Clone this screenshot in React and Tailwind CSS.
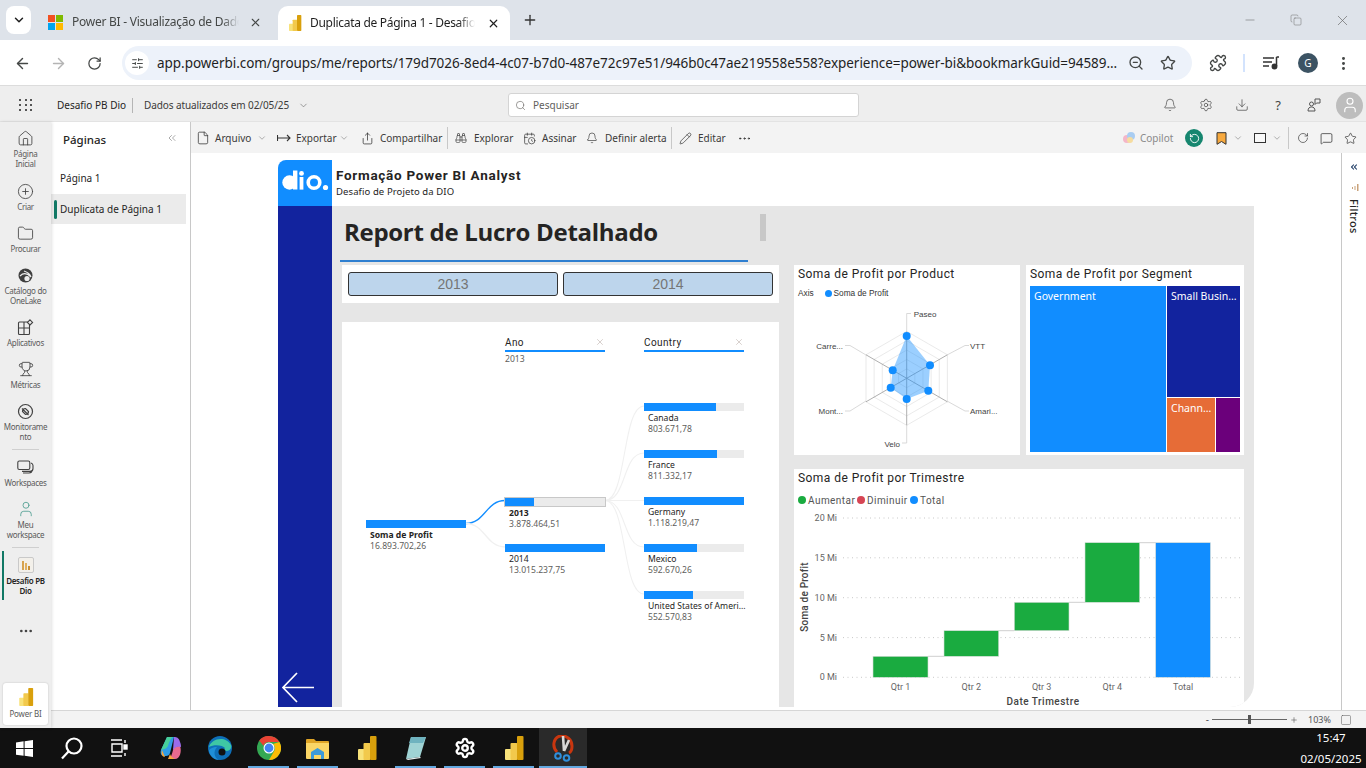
import {
  ArrowLeft, ArrowRight, RotateCw, Search, ZoomOut, Star, Puzzle, MoreVertical, Bell, Settings, Download,
  HelpCircle, ChevronDown, ChevronsLeft, File, Share, Binoculars, Pencil, MoreHorizontal, House, CirclePlus,
  Folder, Trophy, User, X, Plus, Minus, Square, Copy, MessageSquare, RotateCcw, SlidersHorizontal,
  CalendarClock,
} from 'lucide-react';

const din = "font-['Roboto',sans-serif]";

function PbiLogo({ size = 18 }) {
  return (
    <svg width={size} height={size} viewBox="0 0 24 24">
      <rect x="3" y="13" width="7" height="11" rx="1" fill="#f8e27a" />
      <rect x="8.5" y="7" width="7" height="17" rx="1" fill="#f2c94c" />
      <rect x="15" y="0" width="6.5" height="24" rx="1" fill="#d9a00c" />
    </svg>
  );
}

function NavItem({ icon, label, h, bold }) {
  return (
    <div className={`w-full flex flex-col items-center ${h}`}>
      <div className="h-[18px] flex items-center justify-center text-[#424242]">{icon}</div>
      <div className={`mt-[2px] text-[8px] tracking-[-0.3px] leading-[10px] text-center whitespace-pre-line ${bold ? 'font-semibold text-[#252423]' : 'text-[#5a5a5a]'}`}>
        {label}
      </div>
    </div>
  );
}

function Sidebar() {
  return (
    <div className="relative w-[51px] shrink-0 bg-[#eeeeee] flex flex-col items-center pt-[7px] shadow-[1px_0_3px_rgba(0,0,0,0.12)] z-10">
      <NavItem h="h-[53px]" label={'Página\nInicial'} icon={<House size={17} strokeWidth={1.2} />} />
      <NavItem h="h-[42px]" label="Criar" icon={<CirclePlus size={17} strokeWidth={1.2} />} />
      <NavItem h="h-[42px]" label="Procurar" icon={<Folder size={17} strokeWidth={1.2} />} />
      <NavItem
        h="h-[52px]"
        label={'Catálogo do\nOneLake'}
        icon={
          <svg width="17" height="17" viewBox="0 0 17 17">
            <circle cx="8.5" cy="8.5" r="7" fill="#3f3f3f" />
            <path d="M3 9c3-3 7-3 11 1M7 4c3 1 6 3 7 6" fill="none" stroke="#eee" strokeWidth="1.2" />
            <circle cx="10" cy="11.5" r="2.6" fill="#eee" />
          </svg>
        }
      />
      <NavItem
        h="h-[42px]"
        label="Aplicativos"
        icon={
          <svg width="17" height="17" viewBox="0 0 17 17" fill="none" stroke="#424242" strokeWidth="1.1">
            <rect x="1.5" y="3" width="11" height="12.5" rx="1" />
            <path d="M7 3v12.5M1.5 9h11" />
            <path d="M13 0.8l2.6 2.6L13 6l-2.6-2.6z" fill="#eee" />
          </svg>
        }
      />
      <NavItem h="h-[42px]" label="Métricas" icon={<Trophy size={16} strokeWidth={1.3} />} />
      <NavItem
        h="h-[47px]"
        label={'Monitorame\nnto'}
        icon={
          <svg width="17" height="17" viewBox="0 0 17 17" fill="none" stroke="#424242" strokeWidth="1.2">
            <circle cx="8.5" cy="8.5" r="7" />
            <path d="M5 5.5l6.5 6.5M5.5 8.5a3 3 0 0 1 3-3l3 3a3 3 0 0 1-3 3z" />
          </svg>
        }
      />
      <div className="w-[27px] h-px bg-[#cfcfcf] mb-[8px]" />
      <NavItem
        h="h-[42px]"
        label="Workspaces"
        icon={
          <svg width="17" height="17" viewBox="0 0 17 17" fill="none" stroke="#424242" strokeWidth="1.1">
            <rect x="0.8" y="2" width="12" height="8.5" rx="1.5" />
            <path d="M14 4c1.4.6 2 1.2 2 2.4v3c0 2-1 3-3 3H5M15 11c0 2-1 3-3 3H6" />
          </svg>
        }
      />
      <NavItem h="h-[47px]" label={'Meu\nworkspace'} icon={<User size={18} strokeWidth={1.1} className="text-[#4a9b8e]" />} />
      <div className="w-[27px] h-px bg-[#cfcfcf] mb-[8px]" />
      <NavItem
        bold
        h="h-[67px]"
        label={'Desafio PB\nDio'}
        icon={
          <div className="w-[16px] h-[16px] rounded-[2px] bg-[#f3f0ea] border border-[#c9c9c9] flex items-end justify-center gap-[1px] pb-[2px]">
            <span className="w-[2px] h-[9px] bg-[#d7a34f]" />
            <span className="w-[2px] h-[7px] bg-[#e0b060]" />
            <span className="w-[2px] h-[4px] bg-[#c98f35]" />
          </div>
        }
      />
      <div className="absolute left-[2px] top-[429px] w-[2px] h-[49px] bg-[#117865]" />
      <MoreHorizontal size={16} className="text-[#444]" />
      <div className="mt-auto mb-[3px] w-[45px] h-[42px] bg-white rounded-[3px] shadow-[0_0_2px_rgba(0,0,0,0.2)] flex flex-col items-center pt-[5px]">
        <PbiLogo size={18} />
        <div className="mt-[3px] text-[8px] tracking-[-0.2px] leading-[10px] text-[#5a5a5a]">Power BI</div>
      </div>
    </div>
  );
}

function PagesPanel() {
  return (
    <div className="w-[140px] shrink-0 bg-white border-r border-[#c8c8c8] flex flex-col">
      <div className="h-[34px] flex items-center justify-between pl-[12px] pr-[12px] pt-[1px] text-[#252423]">
        <span className="text-[11.5px] font-medium">Páginas</span>
        <ChevronsLeft size={12} strokeWidth={1} className="text-[#555] -mt-[3px]" />
      </div>
      <div className="mt-[7px] h-[31px] pl-[9px] flex items-center text-[10px] text-[#252423]">Página 1</div>
      <div className="w-[135px] h-[30px] bg-[#ebebeb] flex items-center pl-[3px] text-[10px] text-[#252423]">
        <span className="w-[3px] h-[19px] rounded-sm bg-[#117865] mr-[3px]" />
        Duplicata de Página 1
      </div>
    </div>
  );
}

function Toolbar() {
  const txt = 'text-[10px] text-[#3b3a39] whitespace-nowrap';
  return (
    <div className="h-[31px] bg-[#f3f3f3] pt-[1px] flex items-center text-[#333]">
      <File size={14} strokeWidth={1.3} className="ml-[5px]" />
      <span className={`${txt} ml-[5px] w-[40px]`}>Arquivo</span>
      <ChevronDown size={10} strokeWidth={1.2} className="ml-[2px] text-[#666]" />
      <svg width="14" height="10" viewBox="0 0 14 10" className="ml-[10px]" fill="none" stroke="#333" strokeWidth="1.1">
        <path d="M0.5 2v6M1 5h12M10 2l3 3-3 3" />
      </svg>
      <span className={`${txt} ml-[5px] w-[43px]`}>Exportar</span>
      <ChevronDown size={10} strokeWidth={1.2} className="text-[#666]" />
      <Share size={13} strokeWidth={1.4} className="ml-[12px]" />
      <span className={`${txt} ml-[6px] w-[61px]`}>Compartilhar</span>
      <span className="w-px h-[22px] bg-[#c8c8c8] ml-[6px]" />
      <Binoculars size={12} strokeWidth={1.3} className="ml-[7px]" />
      <span className={`${txt} ml-[7px] w-[39px]`}>Explorar</span>
      <CalendarClock size={13} strokeWidth={1.3} className="ml-[10px]" />
      <span className={`${txt} ml-[6px] w-[35px]`}>Assinar</span>
      <Bell size={12} strokeWidth={1.3} className="ml-[9px]" />
      <span className={`${txt} ml-[7px] w-[61px]`}>Definir alerta</span>
      <span className="w-px h-[22px] bg-[#c8c8c8] ml-[5px]" />
      <Pencil size={13} strokeWidth={1.3} className="ml-[7px]" />
      <span className={`${txt} ml-[6px] w-[30px]`}>Editar</span>
      <MoreHorizontal size={15} strokeWidth={1.5} className="ml-[9px]" />

      <div className="ml-auto flex items-center">
        <svg width="14" height="14" viewBox="0 0 14 14">
          <circle cx="5" cy="8" r="4" fill="#f4b6c8" />
          <circle cx="9" cy="5" r="4" fill="#a9cdf2" />
          <circle cx="8" cy="9" r="3" fill="#f6dca0" />
        </svg>
        <span className="ml-[4px] w-[42px] text-[10px] text-[#8a8a8a]">Copilot</span>
        <span className="ml-[3px] w-[18px] h-[18px] rounded-full bg-[#16866f] flex items-center justify-center">
          <RotateCcw size={11} strokeWidth={2} className="text-white" />
        </span>
        <svg width="11" height="13" viewBox="0 0 11 13" className="ml-[13px]">
          <path d="M1 .7h9v11.6L5.5 9.5 1 12.3z" fill="#f7a93e" stroke="#333" strokeWidth="1" />
        </svg>
        <ChevronDown size={10} strokeWidth={1.2} className="ml-[6px] text-[#666]" />
        <span className="ml-[11px] w-[12px] h-[10px] border border-[#333] bg-[#f8f8f8]" />
        <ChevronDown size={10} strokeWidth={1.2} className="ml-[6px] text-[#666]" />
        <span className="w-px h-[22px] bg-[#c8c8c8] ml-[6px]" />
        <RotateCw size={12} strokeWidth={1.3} className="ml-[8px]" />
        <MessageSquare size={13} strokeWidth={1.4} className="ml-[11px]" />
        <Star size={13} strokeWidth={1.3} className="ml-[11px] mr-[9px]" />
      </div>
    </div>
  );
}

function DioLogo() {
  return (
    <svg width="48" height="22" viewBox="0 0 48 22" fill="white">
      <circle cx="8.500" cy="12.500" r="7.200" />
      <path d="M12 .5h4.400v19H12z" />
      <circle cx="20.500" cy="3.400" r="2.400" />
      <path d="M18.600 7h3.800v12.600h-3.800z" />
      <circle cx="33" cy="12.500" r="5.800" fill="none" stroke="white" strokeWidth="3.600" />
      <circle cx="44.500" cy="17.500" r="2.600" />
    </svg>
  );
}

function DecompNode({ fill, label, value, selected, strong, className = '' }) {
  return (
    <div className={`w-[100px] ${className}`}>
      <div className={`h-[8px] bg-[#ebebeb] ${selected ? 'outline outline-1 outline-[#c8c8c8]' : ''}`}>
        <div className={`h-full bg-[#118dff] ${fill}`} />
      </div>
      <div className={`mt-[1px] pl-[4px] text-[8.6px] leading-[12px] whitespace-nowrap ${strong ? 'font-bold text-[#252423]' : 'text-[#252423]'}`}>{label}</div>
      <div className="pl-[4px] text-[8.6px] leading-[11px] text-[#605e5c]">{value}</div>
    </div>
  );
}

function ColumnHeader({ title, className = '' }) {
  return (
    <div className={`w-[100px] h-[16px] pb-[2px] border-b-2 border-[#118dff] flex items-center justify-between text-[10px] text-[#252423] ${din} tracking-[0.4px] ${className}`}>
      {title}
      <X size={10} strokeWidth={1} className="text-[#a08f88]" />
    </div>
  );
}

function DecompTree() {
  const pale = '#f0f0f0';
  return (
    <div className="relative flex-1 bg-white">
      <svg className="absolute inset-0" width="437" height="385" viewBox="342 322 437 385" fill="none">
        <path d="M466 523.5C485 523.5 486 500.5 505 500.5" stroke="#118dff" strokeWidth="1.3" />
        <path d="M466 523.5C485 523.5 486 547 505 547" stroke={pale} strokeWidth="1.3" />
        <path d="M605 500.5C627 500.5 622 406 644 406" stroke={pale} strokeWidth="1.1" />
        <path d="M605 500.5C627 500.5 622 453 644 453" stroke={pale} strokeWidth="1.1" />
        <path d="M605 500.5H644" stroke={pale} strokeWidth="1.1" />
        <path d="M605 500.5C627 500.5 622 547 644 547" stroke={pale} strokeWidth="1.1" />
        <path d="M605 500.5C627 500.5 622 594 644 594" stroke={pale} strokeWidth="1.1" />
      </svg>
      <div className="relative flex pl-[24px]">
        <div className="pt-[198px]">
          <DecompNode fill="w-full" label="Soma de Profit" value="16.893.702,26" strong />
        </div>
        <div className="ml-[39px] pt-[14px]">
          <ColumnHeader title="Ano" />
          <div className="mt-[2px] text-[8.6px] leading-[11px] text-[#605e5c]">2013</div>
          <DecompNode selected className="mt-[133px] h-[46px]" fill="w-[29px]" label="2013" value="3.878.464,51" strong />
          <DecompNode fill="w-full" label="2014" value="13.015.237,75" />
        </div>
        <div className="ml-[39px] pt-[14px]">
          <ColumnHeader title="Country" />
          <div className="mt-[51px]" />
          <DecompNode className="h-[47px]" fill="w-[72px]" label="Canada" value="803.671,78" />
          <DecompNode className="h-[47px]" fill="w-[73px]" label="France" value="811.332,17" />
          <DecompNode className="h-[47px]" fill="w-full" label="Germany" value="1.118.219,47" />
          <DecompNode className="h-[47px]" fill="w-[53px]" label="Mexico" value="592.670,26" />
          <DecompNode className="h-[47px]" fill="w-[49px]" label="United States of Ameri..." value="552.570,83" />
        </div>
      </div>
    </div>
  );
}

function VisualTitle({ children }) {
  return <div className={`h-[17px] pl-[4px] text-[12px] leading-[17px] text-[#252423] tracking-[0.45px] whitespace-nowrap ${din}`}>{children}</div>;
}

function Radar() {
  const cx = 906.7;
  const cy = 378.3;
  const angles = [-90, -30, 30, 90, 150, 210].map((a) => (a * Math.PI) / 180);
  const hex = (r) => angles.map((a) => `${cx + r * Math.cos(a)},${cy + r * Math.sin(a)}`).join(' ');
  const pts = [[906.7, 336], [930, 365.3], [928.3, 390.7], [906.7, 399], [890.7, 387.7], [892.7, 370.3]];
  const labelClass = "font-['Liberation_Sans',sans-serif] text-[8px] fill-[#444]";
  return (
    <svg width="226" height="152" viewBox="794 303 226 152" className="block">
      {[9.4, 18.8, 28.2, 37.6, 47].map((r) => (
        <polygon key={r} points={hex(r)} fill="none" stroke="#e4e4e4" strokeWidth="0.8" />
      ))}
      {angles.map((a, i) => (
        <line key={i} x1={cx} y1={cy} x2={cx + 47 * Math.cos(a)} y2={cy + 47 * Math.sin(a)} stroke="#9a9a9a" strokeWidth="0.8" />
      ))}
      <g fill="none" stroke="#cfcfcf" strokeWidth="0.8">
        <path d="M906.7 331V313.5H911" />
        <path d="M947 355L965 345.5H969" />
        <path d="M947 401L965 411H969" />
        <path d="M906.7 425V443H902" />
        <path d="M866 401L850 411H845" />
        <path d="M866 355L850 345.5H845" />
      </g>
      <polygon points={pts.map((p) => p.join(',')).join(' ')} fill="#118dff" fillOpacity="0.42" />
      {pts.map((p, i) => (
        <circle key={i} cx={p[0]} cy={p[1]} r="4" fill="#118dff" />
      ))}
      <text x="913.7" y="317" className={labelClass}>Paseo</text>
      <text x="970" y="349" className={labelClass}>VTT</text>
      <text x="970" y="414" className={labelClass}>Amari...</text>
      <text x="900" y="447" textAnchor="end" className={labelClass}>Velo</text>
      <text x="843" y="414" textAnchor="end" className={labelClass}>Mont...</text>
      <text x="843" y="349" textAnchor="end" className={labelClass}>Carre...</text>
    </svg>
  );
}

function Waterfall() {
  const grid = [[518, '20 Mi'], [557.8, '15 Mi'], [597.7, '10 Mi'], [637.6, '5 Mi'], [677.3, '0 Mi']];
  const bars = [
    [873, 55, 656.3, 677.3, '#1aab40', 'Qtr 1'],
    [944, 54.7, 630.7, 656.3, '#1aab40', 'Qtr 2'],
    [1014.3, 54.7, 602.3, 630.7, '#1aab40', 'Qtr 3'],
    [1085, 54.7, 542.7, 602.3, '#1aab40', 'Qtr 4'],
    [1155.7, 54.7, 542.7, 677.3, '#118dff', 'Total'],
  ];
  const tick = `text-[9px] fill-[#666] ${din}`;
  return (
    <svg width="450" height="198" viewBox="794 509 450 198" className="block">
      {grid.map(([y, t]) => (
        <g key={t}>
          <line x1="843" x2="1240" y1={y} y2={y} stroke="#c8c8c8" strokeWidth="1" strokeDasharray="1 3.5" />
          <text x="837" y={y + 3} textAnchor="end" className={tick}>{t}</text>
        </g>
      ))}
      <g stroke="#cfcfcf" strokeWidth="1">
        <path d="M928 656.3H944M998.7 630.7H1014.3M1069 602.3H1085M1139.7 542.7H1155.7" />
      </g>
      {bars.map(([x, w, y1, y2, c, t]) => (
        <g key={t}>
          <rect x={x} y={y1} width={w} height={y2 - y1} fill={c} stroke="#d5dcd7" strokeWidth="0.6" />
          <text x={x + w / 2} y="689.5" textAnchor="middle" className={tick}>{t}</text>
        </g>
      ))}
      <text x="1043" y="705" textAnchor="middle" className={`text-[10px] font-medium fill-[#444] tracking-[0.5px] ${din}`}>Date Trimestre</text>
      <text transform="translate(807.5 597) rotate(-90)" textAnchor="middle" className={`text-[10px] font-medium fill-[#444] tracking-[0.2px] ${din}`}>Soma de Profit</text>
    </svg>
  );
}

function Report() {
  return (
    <div className="w-[976px] h-[547px] flex">
      <div className="w-[54px] shrink-0 flex flex-col">
        <div className="h-[46px] bg-[#118dff] rounded-tl-[8px] flex items-center justify-center pb-[5px]">
          <DioLogo />
        </div>
        <div className="flex-1 bg-[#12239e] flex flex-col justify-end">
          <svg width="34" height="32" viewBox="0 0 34 32" className="mb-[3px] ml-[3px]" fill="none" stroke="white" strokeWidth="1.7">
            <path d="M33 15.5H2M16 1L2 15.5 16 30" />
          </svg>
        </div>
      </div>
      <div className="flex-1 flex flex-col">
        <div className="h-[46px] bg-white pl-[4px] pt-[7px] text-[#252423]">
          <div className={`text-[13.5px] leading-[16px] font-bold tracking-[0.72px] ${din}`}>Formação Power BI Analyst</div>
          <div className="mt-[2px] text-[9.5px] leading-[13px] tracking-[0.1px]">Desafio de Projeto da DIO</div>
        </div>
        <div className="flex-1 min-h-0 bg-[#e6e6e6] rounded-br-[24px] overflow-hidden flex pl-[10px]">
          <div className="w-[437px] shrink-0 flex flex-col">
            <div className="h-[54px] relative">
              <div className="h-[54px] flex items-center pl-[2px] pb-[2px] text-[24px] tracking-[-0.3px] font-bold text-[#252423] font-['Open_Sans',sans-serif]">
                Report de Lucro Detalhado
              </div>
              <div className="absolute left-[418px] top-[8px] w-[6px] h-[27px] bg-[#c8c8c8]" />
              <div className="absolute -left-[2px] top-[54px] w-[408px] h-[1.5px] bg-[#2f7fd0]" />
            </div>
            <div className="mt-[5px] h-[38px] bg-white flex items-center px-[6px] gap-[5px]">
              <div className="flex-1 h-[24px] bg-[#bdd5ec] border-[1.5px] border-[#333] rounded-[3px] flex items-center justify-center text-[14px] text-[#757575] font-['Liberation_Sans',sans-serif]">2013</div>
              <div className="flex-1 h-[24px] bg-[#bdd5ec] border-[1.5px] border-[#333] rounded-[3px] flex items-center justify-center text-[14px] text-[#757575] font-['Liberation_Sans',sans-serif]">2014</div>
            </div>
            <div className="mt-[19px] flex-1 flex flex-col"><DecompTree /></div>
          </div>
          <div className="ml-[15px] w-[450px] shrink-0 flex flex-col pt-[59px]">
            <div className="flex gap-[6px]">
              <div className="w-[226px] h-[190px] bg-white">
                <div className="pt-[1px]"><VisualTitle>Soma de Profit por Product</VisualTitle></div>
                <div className="h-[20px] pl-[4px] flex items-center text-[8.3px] text-[#333] font-['Liberation_Sans',sans-serif]">
                  <span className="w-[27px]">Axis</span>
                  <span className="w-[7px] h-[7px] rounded-full bg-[#118dff]" />
                  <span className="ml-[1.5px]">Soma de Profit</span>
                </div>
                <Radar />
              </div>
              <div className="w-[218px] h-[190px] bg-white flex flex-col">
                <div className="pt-[1px] h-[21px]"><VisualTitle>Soma de Profit por Segment</VisualTitle></div>
                <div className="ml-[4px] w-[210px] h-[166px] flex gap-px text-[10.5px] text-white">
                  <div className="w-[136px] bg-[#118dff] pl-[4px] pt-[3px]">Government</div>
                  <div className="flex-1 flex flex-col gap-px">
                    <div className="h-[111px] bg-[#12239e] pl-[4px] pt-[3px] whitespace-nowrap">Small Busin...</div>
                    <div className="flex-1 flex gap-px">
                      <div className="w-[48px] bg-[#e66c37] pl-[4px] pt-[3px]">Chann...</div>
                      <div className="flex-1 bg-[#6b007b]" />
                    </div>
                  </div>
                </div>
              </div>
            </div>
            <div className="mt-[14px] flex-1 bg-white">
              <div className="pt-[1px]"><VisualTitle>Soma de Profit por Trimestre</VisualTitle></div>
              <div className={`h-[22px] pl-[4px] pt-[4px] flex items-center text-[10px] text-[#555] tracking-[0.45px] ${din}`}>
                <span className="w-[8px] h-[8px] rounded-full bg-[#1aab40]" />
                <span className="ml-[2px] w-[49px]">Aumentar</span>
                <span className="w-[8px] h-[8px] rounded-full bg-[#d64554]" />
                <span className="ml-[2px] w-[43px]">Diminuir</span>
                <span className="w-[8px] h-[8px] rounded-full bg-[#118dff]" />
                <span className="ml-[2px]">Total</span>
              </div>
              <Waterfall />
            </div>
          </div>
        </div>
      </div>
    </div>
  );
}

function TaskIcon({ children, className = '', active, mark }) {
  return (
    <div className={`relative h-full flex items-center justify-center ${className} ${active ? 'bg-[#2a2a2a]' : ''}`}>
      {children}
      {mark && <span className={`absolute bottom-0 h-[2px] bg-[#63a8e0] ${active ? 'left-0 right-0' : 'left-[4px] right-[4px]'}`} />}
    </div>
  );
}

function Taskbar() {
  return (
    <div className="h-[40px] shrink-0 bg-[#111111] flex items-center text-white">
      <TaskIcon className="w-[48px]">
        <svg width="17" height="17" viewBox="0 0 17 17" fill="white">
          <path d="M0 2.4l7.6-1.1v6.8H0zM8.6 1.2L17 0v8.1H8.6zM0 9h7.6v6.8L0 14.7zM8.6 9H17v8l-8.4-1.2z" />
        </svg>
      </TaskIcon>
      <TaskIcon className="w-[48px]">
        <svg width="24" height="24" viewBox="0 0 24 24" fill="none" stroke="white" strokeWidth="2.2">
          <circle cx="14" cy="10" r="7.5" />
          <path d="M8.5 15.5L2 22.5" />
        </svg>
      </TaskIcon>
      <TaskIcon className="w-[46px]">
        <svg width="18" height="18" viewBox="0 0 18 18" fill="none" stroke="white" strokeWidth="1.4">
          <path d="M1 1h11M1 17h11M2 5h10v8H2zM15 1v3M15 14v3" />
          <rect x="14" y="6" width="3" height="4" fill="white" />
        </svg>
      </TaskIcon>
      <TaskIcon className="w-[50px] ml-[4px]">
        <svg width="22" height="24" viewBox="0 0 22 24">
          <path d="M7 1h7l-4 16c-.5 2-2 3-4 3H4c-3 0-4-3-3-6z" fill="#2f9de6" />
          <path d="M7 1h6c-2 1-4 5-5 9-1 2-3 3-7 4z" fill="#47d09a" />
          <path d="M15 23H8c3-1 4-5 5-9 1-3 3-4 7-4 2 5 0 13-5 13z" fill="#e86a8e" />
          <path d="M14 1c3 0 5 1 6 5 1 2 1 4 1 5-4-1-6 0-8 3z" fill="#9b6bea" />
          <path d="M2 14l3 7c-3 0-4-3-3-7zM8 23h7c-2-1-4-2-5-5z" fill="#f5a53c" />
        </svg>
      </TaskIcon>
      <TaskIcon className="w-[48px]">
        <svg width="24" height="24" viewBox="0 0 24 24">
          <circle cx="12" cy="12" r="12" fill="#0e6fb8" />
          <path d="M1 11C3 3 17-1 23 9c1 3-1 6-4 6-3 0-3-2-2-3-2-3-11-4-16-1z" fill="#3fc7a4" />
          <path d="M11 24C6 22 5 15 9 11c-4 0-8 2-8 4 1 5 5 9 10 9z" fill="#1f8fd8" />
          <circle cx="14" cy="16" r="3.5" fill="#111" />
        </svg>
      </TaskIcon>
      <TaskIcon className="w-[49px]" mark>
        <svg width="24" height="24" viewBox="0 0 24 24">
          <circle cx="12" cy="12" r="12" fill="#34a853" />
          <path d="M12 0a12 12 0 0 1 10.4 6H12a6 6 0 0 0-5.6 3.8L2.2 4.5A12 12 0 0 1 12 0z" fill="#ea4335" />
          <path d="M22.4 6A12 12 0 0 1 12 24l5.2-9A6 6 0 0 0 16 8z" fill="#fbbc05" />
          <circle cx="12" cy="12" r="5.5" fill="white" />
          <circle cx="12" cy="12" r="4.4" fill="#4285f4" />
        </svg>
      </TaskIcon>
      <TaskIcon className="w-[49px]" mark>
        <svg width="23" height="21" viewBox="0 0 23 21">
          <path d="M0 2a1 1 0 0 1 1-1h7l2 2h12a1 1 0 0 1 1 1v16H0z" fill="#e0a526" />
          <path d="M0 5h23v15a1 1 0 0 1-1 1H1a1 1 0 0 1-1-1z" fill="#fbd666" />
          <path d="M5 14l6.500-4 6.500 4v7h-3v-4H8v4H5z" fill="#3d9ad9" />
        </svg>
      </TaskIcon>
      <TaskIcon className="w-[49px]"><PbiLogo size={24} /></TaskIcon>
      <TaskIcon className="w-[49px]" mark>
        <svg width="24" height="24" viewBox="0 0 24 24">
          <path d="M7 1h15L16 21 2 23z" fill="#9fd3d4" />
          <path d="M7 1h15l-3 6H5z" fill="#6fb3bf" />
          <path d="M2 23l14-2 1 1-13 2z" fill="#e8f2f2" />
        </svg>
      </TaskIcon>
      <TaskIcon className="w-[49px]" mark>
        <Settings size={22} strokeWidth={2.6} />
      </TaskIcon>
      <TaskIcon className="w-[49px]" mark><PbiLogo size={24} /></TaskIcon>
      <TaskIcon className="w-[48px] ml-[1px]" active mark>
        <svg width="22" height="27" viewBox="0 0 22 27" fill="none">
          <path d="M5 17C0 12 1 3 8 1c7-1 12 4 12 10 0 3-1 6-3 7" stroke="#c8360f" strokeWidth="3" />
          <path d="M11 1l1 15M17 5l-5 11" stroke="#d8d8d8" strokeWidth="2.6" />
          <circle cx="6" cy="21" r="2.8" stroke="#2f8fdc" strokeWidth="2" />
          <circle cx="14.500" cy="23" r="2.800" stroke="#2f8fdc" strokeWidth="2" />
        </svg>
      </TaskIcon>
      <div className="ml-auto w-[70px] text-center text-[11.5px] leading-[21px]">
        <div>15:47</div>
        <div>02/05/2025</div>
      </div>
    </div>
  );
}

export default function App() {
  return (
    <div className="w-[1366px] h-[768px] overflow-hidden flex flex-col font-['Noto_Sans',sans-serif] bg-white">
      {/* barra de abas do chrome */}
      <div className="h-[40px] shrink-0 bg-[#dee3ea] flex text-[12px]">
        <div className="ml-[6px] mt-[6px] w-[25px] h-[28px] bg-white rounded-[8px] flex items-center justify-center">
          <ChevronDown size={14} strokeWidth={2.5} className="text-[#1f1f1f]" />
        </div>
        <div className="ml-[17px] w-[226px] h-[34px] mt-[6px] flex items-center text-[#444746]">
          <div className="grid grid-cols-2 gap-px w-[15px] h-[15px] -mt-[2px] shrink-0">
            <span className="bg-[#f25022]" /><span className="bg-[#7fba00]" />
            <span className="bg-[#00a4ef]" /><span className="bg-[#ffb900]" />
          </div>
          <span className="ml-[9px] w-[167px] whitespace-nowrap -mt-[2px] tracking-[-0.25px] [mask-image:linear-gradient(to_right,black_90%,transparent)]">Power BI - Visualização de Dado</span>
          <X size={13} strokeWidth={2} className="ml-[10px] -mt-[2px]" />
        </div>
        <div className="ml-[4px] mt-[6px] w-[232px] h-[34px] bg-white rounded-t-[10px] flex items-center pl-[9px] text-[#1f1f1f]">
          <PbiLogo size={16} />
          <span className="ml-[7px] w-[165px] whitespace-nowrap tracking-[-0.3px] [mask-image:linear-gradient(to_right,black_90%,transparent)]">Duplicata de Página 1 - Desafio</span>
          <X size={13} strokeWidth={2.2} className="ml-[12px]" />
        </div>
        <Plus size={16} strokeWidth={2} className="ml-[12px] mt-[12px] text-[#333]" />
        <div className="ml-auto flex items-center text-[#6b6b6b]">
          <Minus size={14} strokeWidth={1} />
          <Copy size={12} strokeWidth={1} className="ml-[33px]" />
          <X size={17} strokeWidth={1} className="ml-[32px] mr-[15px]" />
        </div>
      </div>

      {/* barra de endereco */}
      <div className="h-[46px] shrink-0 bg-white rounded-t-[10px] border-b border-[#dcdcdc] pt-[1px] flex items-center text-[#444746]">
        <ArrowLeft size={17} strokeWidth={2} className="ml-[14px]" />
        <ArrowRight size={17} strokeWidth={2} className="ml-[19px] text-[#b4b4b4]" />
        <RotateCw size={15} strokeWidth={2} className="ml-[20px]" />
        <div className="ml-[20px] w-[1070px] h-[34px] rounded-full bg-[#edf2fa] flex items-center pl-[3px]">
          <span className="w-[24px] h-[24px] rounded-full bg-white flex items-center justify-center">
            <SlidersHorizontal size={13} strokeWidth={1.8} />
          </span>
          <span className="ml-[8px] w-[958px] whitespace-nowrap text-[13.5px] text-[#1f1f1f] tracking-[-0.04px]">
            app.powerbi.com/groups/me/reports/179d7026-8ed4-4c07-b7d0-487e72c97e51/946b0c47ae219558e558?experience=power-bi&amp;bookmarkGuid=94589...
          </span>
          <ZoomOut size={16} strokeWidth={2} className="ml-[13px]" />
          <Star size={16} strokeWidth={2} className="ml-[16px]" />
        </div>
        <Puzzle size={18} strokeWidth={1.8} className="ml-[17px]" />
        <span className="ml-[16px] w-[2px] h-[18px] bg-[#d3e3fd]" />
        <svg width="16" height="14" viewBox="0 0 16 14" className="ml-[18px]" fill="none" stroke="#333" strokeWidth="1.5">
          <path d="M0 2h11M0 6h9M0 10h6M13.500 1h2.500M13.500 1v9" />
          <circle cx="11.500" cy="10.500" r="2.200" fill="#333" />
        </svg>
        <span className="ml-[19px] w-[20px] h-[20px] rounded-full bg-[#3c5363] flex items-center justify-center text-[10px] text-white">G</span>
        <MoreVertical size={17} strokeWidth={2.2} className="ml-[17px]" />
      </div>

      {/* cabecalho do power bi */}
      <div className="h-[36px] shrink-0 bg-[#eeeeee] border-b border-[#e3e3e3] pt-[3px] flex items-center text-[10px] text-[#252423]">
        <div className="ml-[19px] w-[14px] grid grid-cols-3 gap-[3px]">
          {[...Array(9)].map((_, i) => (
            <span key={i} className="w-[2px] h-[2px] bg-[#555]" />
          ))}
        </div>
        <span className="ml-[24px] w-[75px] whitespace-nowrap">Desafio PB Dio</span>
        <span className="w-px h-[15px] bg-[#b5b5b5]" />
        <span className="ml-[11px] w-[152px] whitespace-nowrap text-[#3b3a39] tracking-[-0.1px]">Dados atualizados em 02/05/25</span>
        <ChevronDown size={11} strokeWidth={1.2} className="ml-[2px] text-[#555]" />
        <div className="ml-[199px] w-[351px] h-[24px] bg-white border border-[#d4d4d4] rounded-[3px] flex items-center pl-[6px] text-[#605e5c]">
          <Search size={11} strokeWidth={1.3} />
          <span className="ml-[7px]">Pesquisar</span>
        </div>
        <div className="ml-auto flex items-center text-[#444]">
          <Bell size={14} strokeWidth={1.2} />
          <Settings size={14} strokeWidth={1.2} className="ml-[22px]" />
          <Download size={14} strokeWidth={1.2} className="ml-[22px]" />
          <span className="ml-[22px] w-[14px] text-center text-[13px] leading-[14px]">?</span>
          <svg width="14" height="14" viewBox="0 0 14 14" className="ml-[22px]" fill="none" stroke="#555" strokeWidth="1">
            <circle cx="4.500" cy="6" r="2" />
            <path d="M1 13c0-3 1.500-4 3.500-4s3.500 1 3.500 4zM8 1h5v4H9.500L8 6.500z" />
          </svg>
          <span className="ml-[15px] mr-[3px] w-[27px] h-[27px] rounded-full bg-[#bdbdbd] flex items-center justify-center">
            <User size={18} strokeWidth={1.5} className="text-white" />
          </span>
        </div>
      </div>

      {/* corpo */}
      <div className="flex-1 min-h-0 flex">
        <Sidebar />
        <div className="flex-1 min-w-0 flex flex-col">
          <div className="flex-1 min-h-0 flex">
            <PagesPanel />
            <div className="flex-1 min-w-0 flex flex-col">
              <Toolbar />
              <div className="flex-1 min-h-0 flex">
                <div className="flex-1 min-w-0 pl-[87px] pt-[7px] bg-white"><Report /></div>
                <div className="w-[25px] shrink-0 border-l border-[#c8c8c8] bg-white flex flex-col items-center">
                  <ChevronsLeft size={10} strokeWidth={2.6} className="mt-[9px] text-[#2f4a70]" />
                  <svg width="9" height="7" viewBox="0 0 9 7" className="mt-[12px] ml-[4px]" fill="#c9a27a">
                    <path d="M0 3h1v2H0zM2.500 2h1v4h-1zM5 0h1.500v7H5z" />
                  </svg>
                  <span className="mt-[8px] [writing-mode:vertical-rl] text-[11px] font-medium text-[#252423] tracking-[0.3px]">Filtros</span>
                </div>
              </div>
            </div>
          </div>
          <div className="h-[18px] shrink-0 bg-[#f3f3f3] border-t border-[#d6d6d6] flex items-center justify-end text-[#555]">
            <span className="text-[10px]">-</span>
            <div className="ml-[3px] relative w-[75px] h-px bg-[#666]">
              <span className="absolute left-[36px] -top-[4px] w-[3px] h-[9px] bg-[#555]" />
            </div>
            <Plus size={8} strokeWidth={1.8} className="ml-[3px]" />
            <span className="ml-[10px] text-[9px]">103%</span>
            <Square size={12} strokeWidth={1} className="ml-[9px] mr-[14px]" />
          </div>
        </div>
      </div>
      <Taskbar />
    </div>
  );
}
